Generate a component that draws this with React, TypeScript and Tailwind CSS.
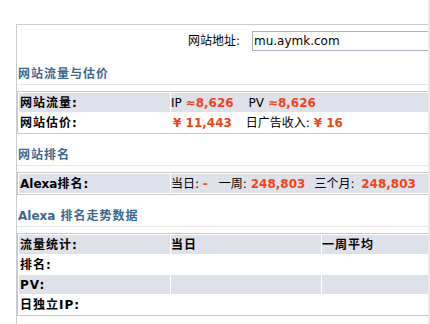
import React from 'react';

const font = 'font-["DejaVu_Sans","Noto_Sans_CJK_SC",sans-serif]';

function Heading({ children, tall }: { children: React.ReactNode; tall?: boolean }) {
  return (
    <div
      className={`${tall ? 'h-[34px]' : 'h-[32px]'} flex items-end border-b border-[#e6e6e6] pl-px`}
    >
      <span className="leading-[20px] font-bold tracking-[1px] text-[#3b6791]">{children}</span>
    </div>
  );
}

function Table({ cols, rows }: { cols: string; rows: React.ReactNode[][] }) {
  return (
    <div className="mt-[6px] border-y border-l border-[#c8c8c8] p-px">
      <div className={`grid ${cols} gap-px`}>
        {rows.map((cells, r) =>
          cells.map((cell, c) => (
            <div
              key={`${r}-${c}`}
              className={`h-[19px] leading-[20px] whitespace-nowrap ${c === 0 ? 'pl-px font-bold tracking-[1px]' : ''} ${
                r % 2 === 0 ? 'bg-[#dfe1ea]' : 'bg-white'
              }`}
            >
              {cell}
            </div>
          ))
        )}
      </div>
    </div>
  );
}

const Red = ({ children, className = '' }: { children: React.ReactNode; className?: string }) => (
  <span className={`font-bold text-[#f04418] ${className}`}>{children}</span>
);

export default function App() {
  return (
    <div className={`flex w-[430px] h-[324px] bg-white text-[12px] text-black ${font}`}>
      <div className="w-[428px] pl-[16px] pt-[24px] overflow-hidden">
        <div className="h-full w-[440px] border-l border-t border-[#c9ced3]">
          <div className="mt-[6px] flex items-center">
            <span className="w-[223px] text-right">网站地址:</span>
            <div className="ml-[12px] h-[20px] w-[200px] border border-[#a9b3bd] pl-px leading-[18px]">
              mu.aymk.com
            </div>
          </div>

          <Heading tall>网站流量与估价</Heading>
          <Table
            cols="grid-cols-[151px_1fr]"
            rows={[
              [
                '网站流量:',
                <>
                  IP <Red>≈8,626</Red>
                  <span className="ml-[15px]">PV</span> <Red>≈8,626</Red>
                </>,
              ],
              [
                '网站估价:',
                <>
                  <Red className="ml-[2px]">¥ 11,443</Red>
                  <span className="ml-[14px]">日广告收入:</span> <Red>¥ 16</Red>
                </>,
              ],
            ]}
          />

          <Heading>网站排名</Heading>
          <Table
            cols="grid-cols-[151px_1fr]"
            rows={[
              [
                <>
                  <span className="tracking-normal">Alexa</span>排名:
                </>,
                <>
                  当日: <Red>-</Red>
                  <span className="ml-[11px]">一周:</span> <Red>248,803</Red>
                  <span className="ml-[9px]">三个月:</span> <Red className="ml-[3px]">248,803</Red>
                </>,
              ],
            ]}
          />

          <Heading>
            <span className="tracking-normal">Alexa</span> 排名走势数据
          </Heading>
          <Table
            cols="grid-cols-[151px_150px_1fr]"
            rows={[
              ['流量统计:', <b className="tracking-[1px]">当日</b>, <b className="tracking-[1px]">一周平均</b>],
              ['排名:', '', ''],
              ['PV:', '', ''],
              ['日独立IP:', '', ''],
            ]}
          />
        </div>
      </div>
      <div className="w-[2px] h-full bg-[#e9e9e9]" />
    </div>
  );
}
